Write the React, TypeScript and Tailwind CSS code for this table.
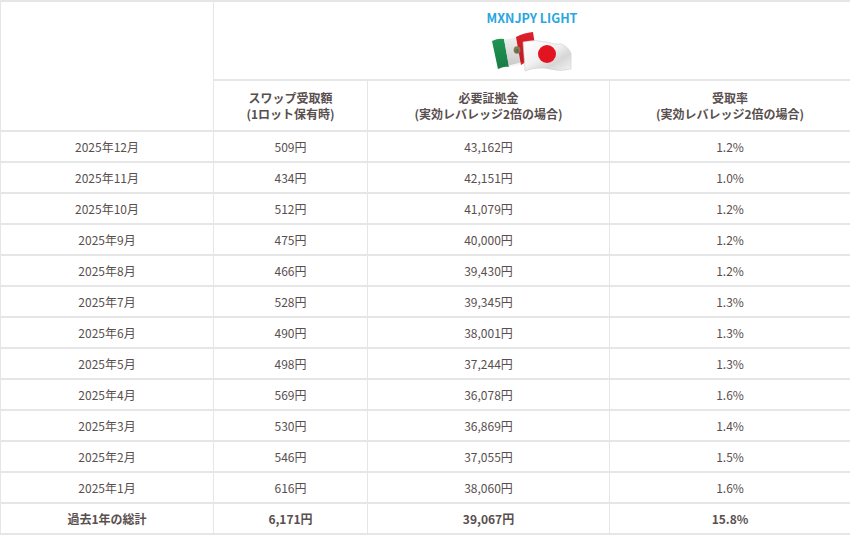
const rows = [
  { month: "2025年12月", swap: "509円", margin: "43,162円", rate: "1.2%" },
  { month: "2025年11月", swap: "434円", margin: "42,151円", rate: "1.0%" },
  { month: "2025年10月", swap: "512円", margin: "41,079円", rate: "1.2%" },
  { month: "2025年9月", swap: "475円", margin: "40,000円", rate: "1.2%" },
  { month: "2025年8月", swap: "466円", margin: "39,430円", rate: "1.2%" },
  { month: "2025年7月", swap: "528円", margin: "39,345円", rate: "1.3%" },
  { month: "2025年6月", swap: "490円", margin: "38,001円", rate: "1.3%" },
  { month: "2025年5月", swap: "498円", margin: "37,244円", rate: "1.3%" },
  { month: "2025年4月", swap: "569円", margin: "36,078円", rate: "1.6%" },
  { month: "2025年3月", swap: "530円", margin: "36,869円", rate: "1.4%" },
  { month: "2025年2月", swap: "546円", margin: "37,055円", rate: "1.5%" },
  { month: "2025年1月", swap: "616円", margin: "38,060円", rate: "1.6%" },
];

function Flags() {
  return (
    <svg width="84" height="44" viewBox="0 0 84 44" className="mx-auto block">
      <defs>
        <linearGradient id="jpShade" x1="0" y1="0" x2="1" y2="1">
          <stop offset="0" stopColor="#ffffff" />
          <stop offset="0.45" stopColor="#f2f2f2" />
          <stop offset="0.7" stopColor="#d6d6d6" />
          <stop offset="1" stopColor="#f4f4f4" />
        </linearGradient>
        <linearGradient id="mxShade" x1="0" y1="0" x2="0" y2="1">
          <stop offset="0" stopColor="#000" stopOpacity="0" />
          <stop offset="1" stopColor="#000" stopOpacity="0.2" />
        </linearGradient>
      </defs>
      {/* mexico */}
      <path d="M2 9 Q8 6 14 7 L19 35 Q14 34 8 37 Z" fill="#1f9a55" />
      <path d="M14 7 Q20 8 26 5 L31 33 Q25 35 19 35 Z" fill="#f7f7f7" />
      <path d="M26 5 Q33 1 43 0 L47 27 Q38 28 31 33 Z" fill="#e0202a" />
      <path d="M2 9 Q20 8 43 0 L47 27 Q25 31 8 37 Z" fill="url(#mxShade)" />
      <ellipse cx="27" cy="18" rx="3.4" ry="3.8" fill="#8a7a5a" />
      <ellipse cx="27" cy="19" rx="1.9" ry="2.1" fill="#5f6f4a" />
      {/* japan */}
      <path
        d="M33 10 Q45 7 56 10 Q66 13 72 12 Q78 15 81 21 L81 37 Q70 40 60 37 Q48 34 35 39 Q34 23 33 10 Z"
        fill="url(#jpShade)"
        stroke="#cfcfcf"
        strokeWidth="0.6"
      />
      <circle cx="57" cy="22" r="9" fill="#e3141f" />
    </svg>
  );
}

export default function App() {
  const cell = "border-x border-y-2 border-[#e6e6e6] text-center align-middle";
  return (
    <div className="w-[850px] h-[535px] bg-white text-[#594f4f] text-[12px] font-['Noto_Sans_CJK_JP','Noto_Sans',sans-serif]">
      <table className="w-[850px] border-collapse table-fixed">
        <colgroup>
          <col className="w-[213px]" />
          <col className="w-[154px]" />
          <col className="w-[242px]" />
          <col className="w-[241px]" />
        </colgroup>
        <thead>
          <tr>
            <th rowSpan={2} className={cell}></th>
            <th colSpan={3} className="border-x border-y-2 border-[#e6e6e6] text-center align-top h-[79px] pt-[10px]">
              <div className="text-[#2aa6e0] font-bold text-[12.5px] leading-none mb-[7px]">MXNJPY LIGHT</div>
              <Flags />
            </th>
          </tr>
          <tr className="font-bold leading-[16px]">
            <th className={`${cell} h-[51px]`}>
              スワップ受取額
              <br />
              (1ロット保有時)
            </th>
            <th className={cell}>
              必要証拠金
              <br />
              (実効レバレッジ2倍の場合)
            </th>
            <th className={cell}>
              受取率
              <br />
              (実効レバレッジ2倍の場合)
            </th>
          </tr>
        </thead>
        <tbody>
          {rows.map((r) => (
            <tr key={r.month}>
              <td className={`${cell} h-[31px]`}>{r.month}</td>
              <td className={cell}>{r.swap}</td>
              <td className={cell}>{r.margin}</td>
              <td className={cell}>{r.rate}</td>
            </tr>
          ))}
          <tr className="font-bold">
            <td className={`${cell} h-[31px]`}>過去1年の総計</td>
            <td className={cell}>6,171円</td>
            <td className={cell}>39,067円</td>
            <td className={cell}>15.8%</td>
          </tr>
        </tbody>
      </table>
    </div>
  );
}
